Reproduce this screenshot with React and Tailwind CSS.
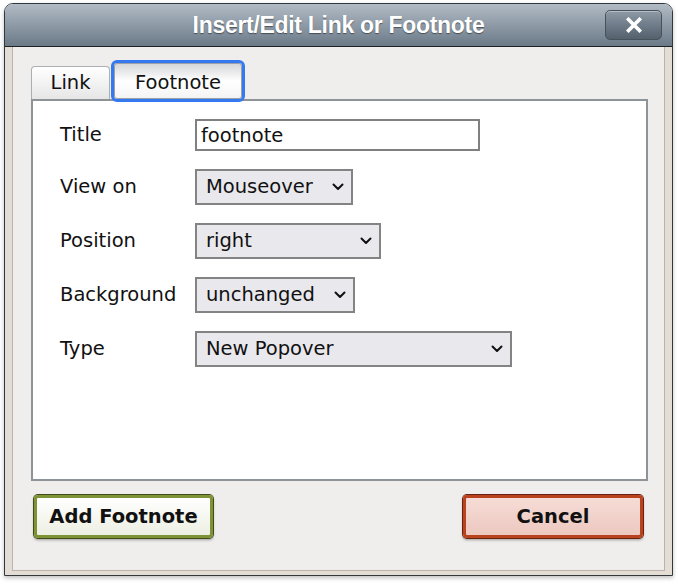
import { useState } from 'react'

const Chevron = () => (
  <svg width="12" height="8" viewBox="0 0 12 8" className="shrink-0">
    <path d="M1.5 1.5 L6 6 L10.5 1.5" fill="none" stroke="#111" strokeWidth="2" strokeLinecap="round" strokeLinejoin="round" />
  </svg>
)

function Select({ value, width }) {
  return (
    <div
      className={`h-[36px] ${width} flex items-center justify-between border-2 border-[#838383] bg-[#e9e8ed] pl-[9px] pr-[7px] text-[#111]`}
    >
      <span>{value}</span>
      <Chevron />
    </div>
  )
}

function Row({ label, children }) {
  return (
    <div className="flex items-center">
      <div className="w-[135px] shrink-0 text-[#111]">{label}</div>
      {children}
    </div>
  )
}

export default function App() {
  const [title, setTitle] = useState('footnote')

  return (
    <div className="w-[678px] h-[586px] bg-white pt-[3px] pl-[4px] font-['DejaVu_Sans',Verdana,sans-serif] text-[19.5px] overflow-hidden">
      <div className="w-[669px] h-[573px] flex flex-col rounded-t-[9px] border border-[#33383d] overflow-hidden shadow-[0_2px_4px_rgba(0,0,0,0.25)]">

        {/* title bar */}
        <div className="relative h-[43px] shrink-0 flex items-center justify-center border-b border-[#1d2124] bg-gradient-to-b from-[#b1bbc5] to-[#6c7a88]">
          <h1 className="font-['Liberation_Sans',Arial,sans-serif] font-bold text-[23px] tracking-[-0.3px] text-white [text-shadow:0_1px_1px_rgba(0,0,0,0.45)]">
            Insert/Edit Link or Footnote
          </h1>
          <button className="absolute right-[10px] top-[6px] w-[57px] h-[30px] rounded-[5px] border border-[#46515b] bg-gradient-to-b from-[#8f9aa5] via-[#6f7c89] to-[#55616d] shadow-[inset_0_1px_0_rgba(255,255,255,0.35)] flex items-center justify-center">
            <svg width="16" height="16" viewBox="0 0 16 16">
              <path d="M2.5 2.5 L13.5 13.5 M13.5 2.5 L2.5 13.5" stroke="white" strokeWidth="3.6" strokeLinecap="square" />
            </svg>
          </button>
        </div>

        {/* body frame */}
        <div className="flex-1 flex flex-col bg-[#e3ddd6] px-[7px] pb-[4px]">
          <div className="flex-1 flex flex-col bg-[#efeeec] border-l border-r border-b border-[#bcb4ac] pl-[18px] pr-[16px] pt-[16px]">

            {/* tabs */}
            <div className="flex items-end">
              <div className="h-[33px] w-[79px] flex items-center justify-center rounded-t-[4px] border border-b-0 border-[#a9afb3] bg-gradient-to-b from-white to-[#e6e6e6] text-[#111]">
                Link
              </div>
              <div className="relative z-10 ml-[4px] h-[36px] w-[128px] pt-[4px] flex items-center justify-center border border-[#9aa0a5] bg-gradient-to-b from-[#d6d7d9] via-white to-[#f4f4f4] text-[#111] outline-[3px] outline-solid outline-[#3479ef] rounded-[3px]">
                Footnote
              </div>
            </div>

            {/* panel */}
            <div className="h-[382px] shrink-0 bg-white border-2 border-[#8e9397] pl-[27px] pt-[18px] flex flex-col gap-[18px]">
              <Row label="Title">
                <input
                  value={title}
                  onChange={e => setTitle(e.target.value)}
                  className="w-[285px] h-[32px] border-2 border-[#808080] px-[4px] text-[#111] outline-none bg-white"
                />
              </Row>
              <Row label="View on">
                <Select value="Mouseover" width="w-[158px]" />
              </Row>
              <Row label="Position">
                <Select value="right" width="w-[186px]" />
              </Row>
              <Row label="Background">
                <Select value="unchanged" width="w-[160px]" />
              </Row>
              <Row label="Type">
                <Select value="New Popover" width="w-[317px]" />
              </Row>
            </div>

            {/* buttons */}
            <div className="mt-[14px] flex justify-between pl-[3px] pr-[5px]">
              <button className="w-[179px] h-[43px] pt-[1px] rounded-[4px] border-[3px] border-[#7e9336] bg-gradient-to-b from-white to-[#edefe2] shadow-[0_0_0_1px_#414c17,0_2px_3px_rgba(0,0,0,0.35)] font-bold text-[#111]">
                Add Footnote
              </button>
              <button className="w-[180px] h-[43px] pt-[1px] rounded-[4px] border-[3px] border-[#b9431f] bg-gradient-to-b from-[#f6dcd6] to-[#ecc8c0] shadow-[0_0_0_1px_#6b230f,0_2px_3px_rgba(0,0,0,0.35)] font-bold text-[#111]">
                Cancel
              </button>
            </div>
          </div>
        </div>
      </div>
    </div>
  )
}
